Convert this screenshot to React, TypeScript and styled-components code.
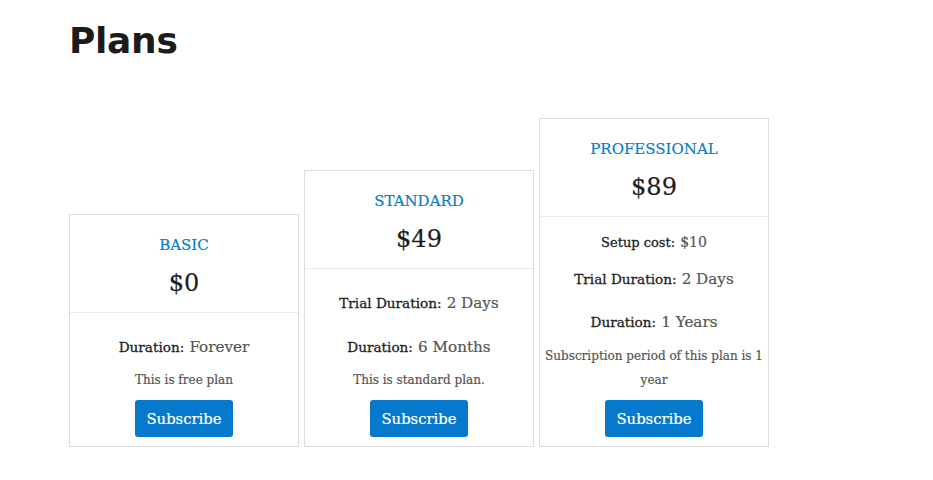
import React from "react";
import styled, { createGlobalStyle } from "styled-components";

const GlobalStyle = createGlobalStyle`
  html, body {
    margin: 0;
    padding: 0;
    background: #fff;
  }
  body {
    font-family: "DejaVu Serif", "Liberation Serif", serif;
    color: #222;
  }
`;

const Page = styled.div`
  width: 933px;
  height: 480px;
  padding: 19px 69px 0;
  box-sizing: border-box;
`;

const Title = styled.h1`
  margin: 0;
  font-family: "DejaVu Sans", "Liberation Sans", sans-serif;
  font-weight: 700;
  font-size: 36px;
  line-height: 43px;
  letter-spacing: -0.3px;
  color: #1b1b1b;
`;

const CardRow = styled.div`
  display: flex;
  align-items: flex-end;
  gap: 5px;
  margin-top: 56px;
`;

const Card = styled.div`
  width: 230px;
  box-sizing: border-box;
  border: 1px solid #dddddd;
  background: #fff;
  text-align: center;
  -webkit-text-stroke: 0.2px currentColor;
`;

const CardHead = styled.div`
  padding: 18px 0 11px;
  border-bottom: 1px solid #ececec;
`;

const PlanName = styled.div`
  font-size: 15px;
  line-height: 24px;
  color: #0a7bcc;
  text-transform: uppercase;
`;

const Price = styled.div`
  margin-top: 8px;
  font-size: 24px;
  line-height: 36px;
  color: #1d1d1d;
`;

const CardBody = styled.div`
  padding: 0 3px 9px;
`;

const Row = styled.div<{ $top: number }>`
  margin-top: ${(p) => p.$top}px;
  line-height: 24px;
  white-space: nowrap;
`;

const Label = styled.span<{ $small?: boolean }>`
  font-size: ${(p) => (p.$small ? 13 : 13.6)}px;
  color: #1e1e1e;
  -webkit-text-stroke: 0.3px currentColor;
`;

const Value = styled.span<{ $small?: boolean }>`
  font-size: ${(p) => (p.$small ? 14 : 15.2)}px;
  color: #555;
`;

const Description = styled.p<{ $top: number }>`
  margin: ${(p) => p.$top}px 0 0;
  font-size: 12px;
  line-height: 24px;
  color: #555;
`;

const SubscribeButton = styled.button`
  display: inline-flex;
  align-items: center;
  justify-content: center;
  height: 37px;
  margin-top: 8px;
  padding: 0 11px;
  border: none;
  border-radius: 3px;
  background: #0779cc;
  color: #fff;
  font-family: "DejaVu Serif", "Liberation Serif", serif;
  font-size: 14.8px;
  -webkit-text-stroke: 0.2px currentColor;
  cursor: pointer;
`;

type Detail = { label: string; value: string; top: number; small?: boolean };

type Plan = {
  name: string;
  price: string;
  details: Detail[];
  description: string;
  descTop: number;
};

const plans: Plan[] = [
  {
    name: "Basic",
    price: "$0",
    details: [{ label: "Duration:", value: "Forever", top: 22 }],
    description: "This is free plan",
    descTop: 9,
  },
  {
    name: "Standard",
    price: "$49",
    details: [
      { label: "Trial Duration:", value: "2 Days", top: 22 },
      { label: "Duration:", value: "6 Months", top: 20 },
    ],
    description: "This is standard plan.",
    descTop: 9,
  },
  {
    name: "Professional",
    price: "$89",
    details: [
      { label: "Setup cost:", value: "$10", top: 13, small: true },
      { label: "Trial Duration:", value: "2 Days", top: 12 },
      { label: "Duration:", value: "1 Years", top: 19 },
    ],
    description: "Subscription period of this plan is 1 year",
    descTop: 10,
  },
];

export default function App() {
  return (
    <>
      <GlobalStyle />
      <Page>
        <Title>Plans</Title>
        <CardRow>
          {plans.map((plan) => (
            <Card key={plan.name}>
              <CardHead>
                <PlanName>{plan.name}</PlanName>
                <Price>{plan.price}</Price>
              </CardHead>
              <CardBody>
                {plan.details.map((d) => (
                  <Row key={d.label} $top={d.top}>
                    <Label $small={d.small}>{d.label}</Label>{" "}
                    <Value $small={d.small}>{d.value}</Value>
                  </Row>
                ))}
                <Description $top={plan.descTop}>{plan.description}</Description>
                <SubscribeButton>Subscribe</SubscribeButton>
              </CardBody>
            </Card>
          ))}
        </CardRow>
      </Page>
    </>
  );
}
